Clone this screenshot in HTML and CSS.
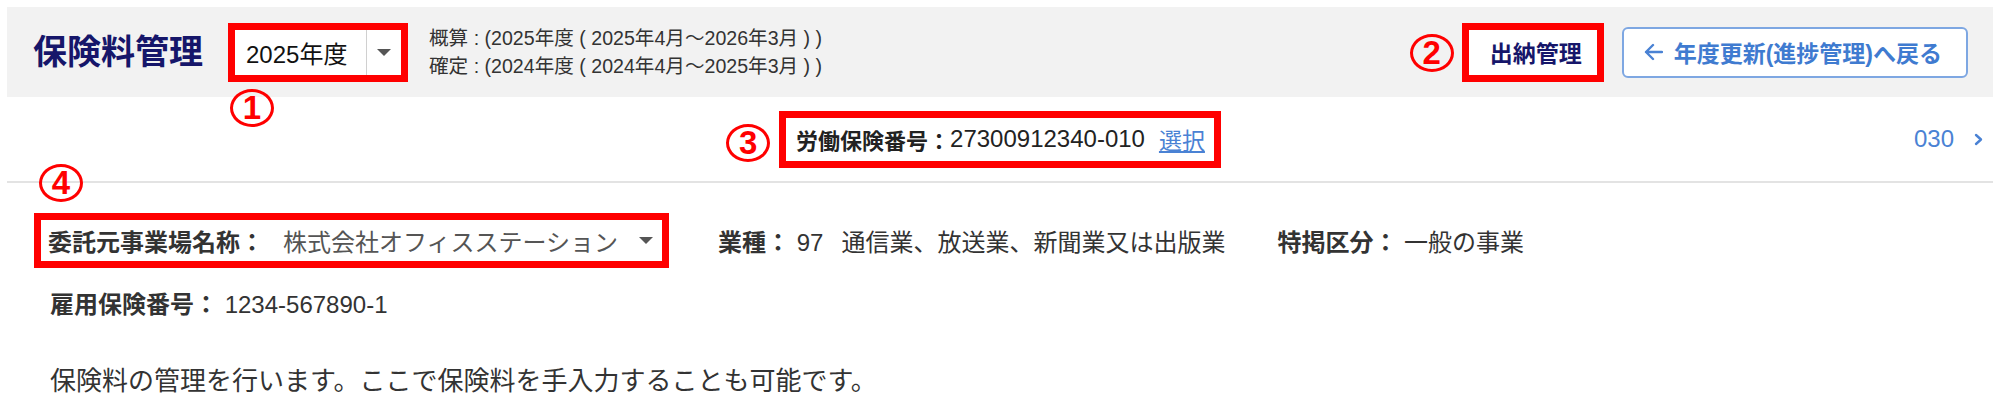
FILE: index.html
```html
<!DOCTYPE html>
<html lang="ja">
  <head>
    <meta charset="utf-8">
    <title>保険料管理</title>
    <link rel="stylesheet" href="styles.css">
  </head>
  <body>
    <div class="page">
      <div class="heading">
        <h1 class="title">保険料管理</h1>
        <div class="mark-box">
          <div class="year-select">
            <span class="year-value">2025年度</span>
            <span class="year-caret"><span class="caret"></span></span>
          </div>
          <span class="num num-1">1</span>
        </div>
        <div class="period">
          <div>概算 : (2025年度 ( 2025年4月～2026年3月 ) )</div>
          <div>確定 : (2024年度 ( 2024年4月～2025年3月 ) )</div>
        </div>
        <div class="actions">
          <div class="mark-box">
            <span class="num num-2">2</span>
            <button class="plain-btn">出納管理</button>
          </div>
          <button class="back-btn">
            <svg width="20" height="18" viewBox="0 0 20 18">
              <path d="M19 9H3M10 2L3 9l7 7" fill="none" stroke="#4a82d4" stroke-width="2.4" stroke-linecap="round" stroke-linejoin="round"/>
            </svg>
            年度更新(進捗管理)へ戻る
          </button>
        </div>
      </div>

      <div class="number-bar">
        <div></div>
        <div class="mark-box">
          <span class="num num-3">3</span>
          <div class="labor-no">
            <span class="label">労働保険番号：</span><span class="labor-value">27300912340-010</span>
            <a class="link" href="#">選択</a>
          </div>
        </div>
        <div class="office-code">
          030
          <svg width="9" height="13" viewBox="0 0 9 13">
            <path d="M2 2l5 4.5L2 11" fill="none" stroke="#4a82d4" stroke-width="2.4" stroke-linecap="round" stroke-linejoin="round"/>
          </svg>
        </div>
      </div>

      <div class="office-row">
        <div class="mark-box office-box">
          <span class="num num-4">4</span>
          <div class="office-select">
            <span class="label">委託元事業場名称：</span>
            <span class="office-name">株式会社オフィスステーション</span>
            <span class="caret"></span>
          </div>
        </div>
        <div class="field field-type">
          <span class="label">業種：</span> 97<span class="gap">通信業、放送業、新聞業又は出版業</span>
        </div>
        <div class="field field-special">
          <span class="label">特掲区分：</span> 一般の事業
        </div>
      </div>

      <div class="field-row">
        <span class="label">雇用保険番号：</span> 1234-567890-1
      </div>

      <p class="note">保険料の管理を行います。ここで保険料を手入力することも可能です。</p>
    </div>
  </body>
</html>
```

FILE: styles.css
```css
html {
  font-family: "Liberation Sans", "Noto Sans CJK JP", sans-serif;
  color: #333;
}

body {
  margin: 0;
}

button {
  font-family: inherit;
  cursor: pointer;
}

.page {
  padding: 7px;
}

.label {
  font-weight: bold;
}

/* header */

.heading {
  display: flex;
  align-items: center;
  height: 90px;
  padding: 0 25px 0 26px;
  background: #f2f2f2;
}

.title {
  margin: 0 25px 0 0;
  font-size: 34px;
  line-height: 1;
  color: #16166a;
}

.mark-box {
  position: relative;
  border: 7px solid #ff0000;
}

.num {
  position: absolute;
  width: 44px;
  height: 38px;
  box-sizing: border-box;
  border: 3px solid #ff0000;
  border-radius: 50%;
  color: #ff0000;
  font-size: 33px;
  font-weight: bold;
  line-height: 32px;
  text-align: center;
}

.num-1 { left: -5px; top: 59px; }
.num-2 { left: -59px; top: 4px; }
.num-3 { left: -60px; top: 6px; }
.num-4 { left: -2px; top: -56px; }

.year-select {
  display: flex;
  align-items: center;
  width: 166px;
  height: 45px;
  background: #fff;
}

.year-value {
  flex: 1;
  padding-left: 11px;
  font-size: 24px;
  color: #111;
}

.year-caret {
  display: flex;
  align-items: center;
  justify-content: center;
  width: 34px;
  height: 100%;
  border-left: 1px solid #d0d0d0;
}

.caret {
  width: 0;
  height: 0;
  border-left: 7px solid transparent;
  border-right: 7px solid transparent;
  border-top: 7px solid #555;
}

.period {
  margin-left: 21px;
  font-size: 19.6px;
  line-height: 28px;
  color: #333;
}

.actions {
  display: flex;
  align-items: center;
  gap: 18px;
  margin-left: auto;
}

.plain-btn {
  width: 128px;
  height: 45px;
  padding: 0 0 0 6px;
  border: none;
  background: #fff;
  font-size: 23px;
  font-weight: bold;
  color: #16166a;
}

.back-btn {
  display: flex;
  align-items: center;
  gap: 11px;
  height: 51px;
  padding: 0 24px 0 19px;
  border: 2px solid #7ea7e2;
  border-radius: 6px;
  background: #fff;
  font-size: 23px;
  font-weight: bold;
  color: #3f7bd0;
}

/* labour insurance number */

.number-bar {
  display: grid;
  grid-template-columns: 1fr auto 1fr;
  align-items: center;
  height: 84px;
  border-bottom: 2px solid #e3e3e3;
}

.labor-no {
  display: flex;
  align-items: center;
  height: 43px;
  padding: 0 9px 0 10px;
  font-size: 22px;
  color: #222;
}

.labor-value {
  font-size: 24px;
}

.link {
  margin-left: 14px;
  font-size: 23px;
  color: #4a82d4;
}

.office-code {
  display: flex;
  align-items: center;
  justify-self: end;
  gap: 20px;
  padding-right: 10px;
  font-size: 24px;
  color: #4a82d4;
}

/* office info */

.office-row {
  display: flex;
  align-items: center;
  margin-top: 30px;
  font-size: 24px;
}

.office-box {
  margin-left: 27px;
}

.office-select {
  display: flex;
  align-items: center;
  height: 41px;
  padding: 0 9px 0 7px;
  background: #fff;
}

.office-name {
  margin: 0 21px 0 19px;
  color: #555;
}

.field-type {
  margin-left: 49px;
}

.field-special {
  margin-left: 52px;
}

.gap {
  margin-left: 18px;
}

.field-row {
  margin: 19px 0 0 43px;
  font-size: 24px;
  line-height: 36px;
}

.note {
  margin: 40px 0 0 43px;
  font-size: 26px;
  line-height: 36px;
  color: #333;
}
```
